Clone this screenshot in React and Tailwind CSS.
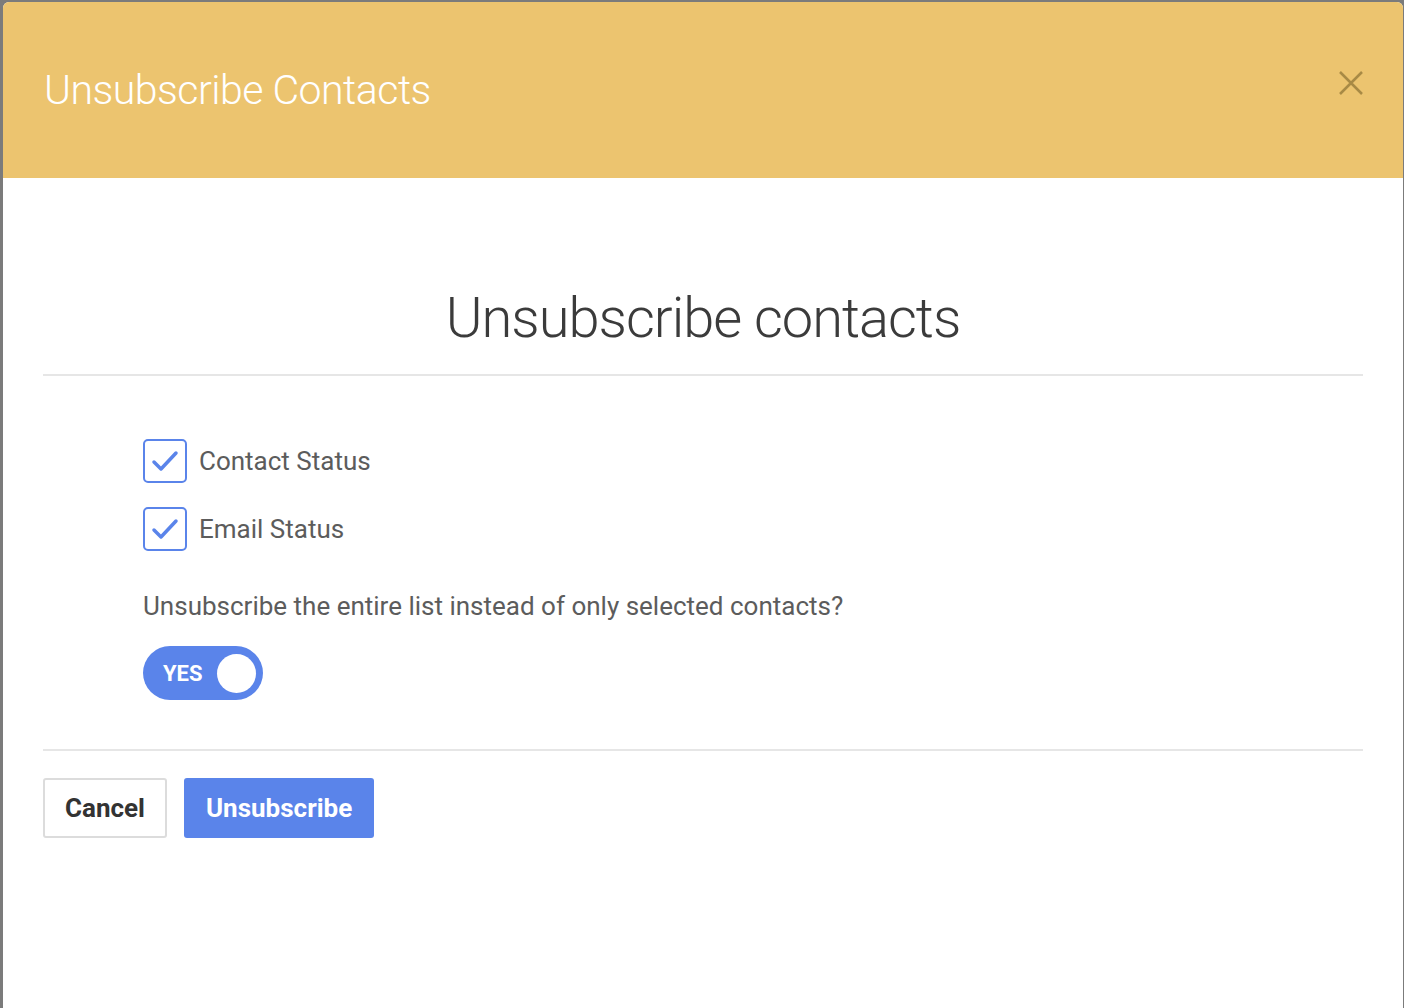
import { useState } from 'react';

function Check({ label, checked, onToggle }) {
  return (
    <label className="flex items-center gap-3 cursor-pointer" onClick={onToggle}>
      <span className="flex h-[44px] w-[44px] items-center justify-center rounded-[5px] border-2 border-[#5a84ea] bg-white">
        {checked && (
          <svg width="32" height="32" viewBox="0 0 32 32" fill="none">
            <path d="M5 17 L12 24 L27 8" stroke="#5a84ea" strokeWidth="3.5" strokeLinecap="round" strokeLinejoin="round" />
          </svg>
        )}
      </span>
      <span className="text-[26px] text-[#5c5c5c]">{label}</span>
    </label>
  );
}

export default function App() {
  const [contactStatus, setContactStatus] = useState(true);
  const [emailStatus, setEmailStatus] = useState(true);
  const [entireList, setEntireList] = useState(true);

  return (
    <div
      className="h-[1008px] w-[1404px] overflow-hidden bg-[#7b7b7b] pl-[3px] pt-[2px]"
      style={{ fontFamily: 'Roboto, "Liberation Sans", sans-serif' }}
    >
      <div className="flex h-[1010px] w-[1400px] flex-col overflow-hidden rounded-t-[6px] bg-white">
        {/* header */}
        <div className="flex h-[176px] shrink-0 items-center justify-between bg-[#ecc46f] pl-[41px] pr-[40px]">
          <h1 className="text-[41px] font-light leading-none tracking-[-0.5px] text-white">Unsubscribe Contacts</h1>
          <button className="-mt-[14px] text-[#a88a45]">
            <svg width="24" height="24" viewBox="0 0 24 24">
              <path d="M1 1 L23 23 M23 1 L1 23" stroke="currentColor" strokeWidth="2.5" />
            </svg>
          </button>
        </div>

        {/* body */}
        <div className="px-[40px]">
          <h2 className="pt-[108px] pb-[24px] text-center text-[56px] font-light leading-[64px] tracking-[-1px] text-[#3b3b3b]">
            Unsubscribe contacts
          </h2>
          <div className="h-[2px] bg-[#e6e6e6]" />

          <div className="px-[100px] pt-[63px] pb-[49px]">
            <div className="flex flex-col gap-[24px]">
              <Check label="Contact Status" checked={contactStatus} onToggle={() => setContactStatus(!contactStatus)} />
              <Check label="Email Status" checked={emailStatus} onToggle={() => setEmailStatus(!emailStatus)} />
            </div>

            <p className="mt-[38px] text-[26px] leading-[34px] text-[#5c5c5c]">
              Unsubscribe the entire list instead of only selected contacts?
            </p>

            <button
              onClick={() => setEntireList(!entireList)}
              className={`mt-[23px] flex h-[54px] w-[120px] items-center justify-between rounded-full pl-[20px] pr-[7px] ${entireList ? 'bg-[#5a84ea]' : 'bg-[#ccc]'}`}
            >
              <span className="text-[22px] font-bold text-white">YES</span>
              <span className="h-[39px] w-[39px] rounded-full bg-white" />
            </button>
          </div>

          <div className="h-[2px] bg-[#e6e6e6]" />

          <div className="flex gap-[17px] pt-[27px]">
            <button className="h-[60px] rounded-[3px] border-2 border-[#dcdcdc] bg-white px-[20px] text-[26px] font-bold text-[#333]">
              Cancel
            </button>
            <button className="h-[60px] rounded-[3px] bg-[#5a84ea] px-[22px] text-[26px] font-bold text-white">
              Unsubscribe
            </button>
          </div>
        </div>
      </div>
    </div>
  );
}
